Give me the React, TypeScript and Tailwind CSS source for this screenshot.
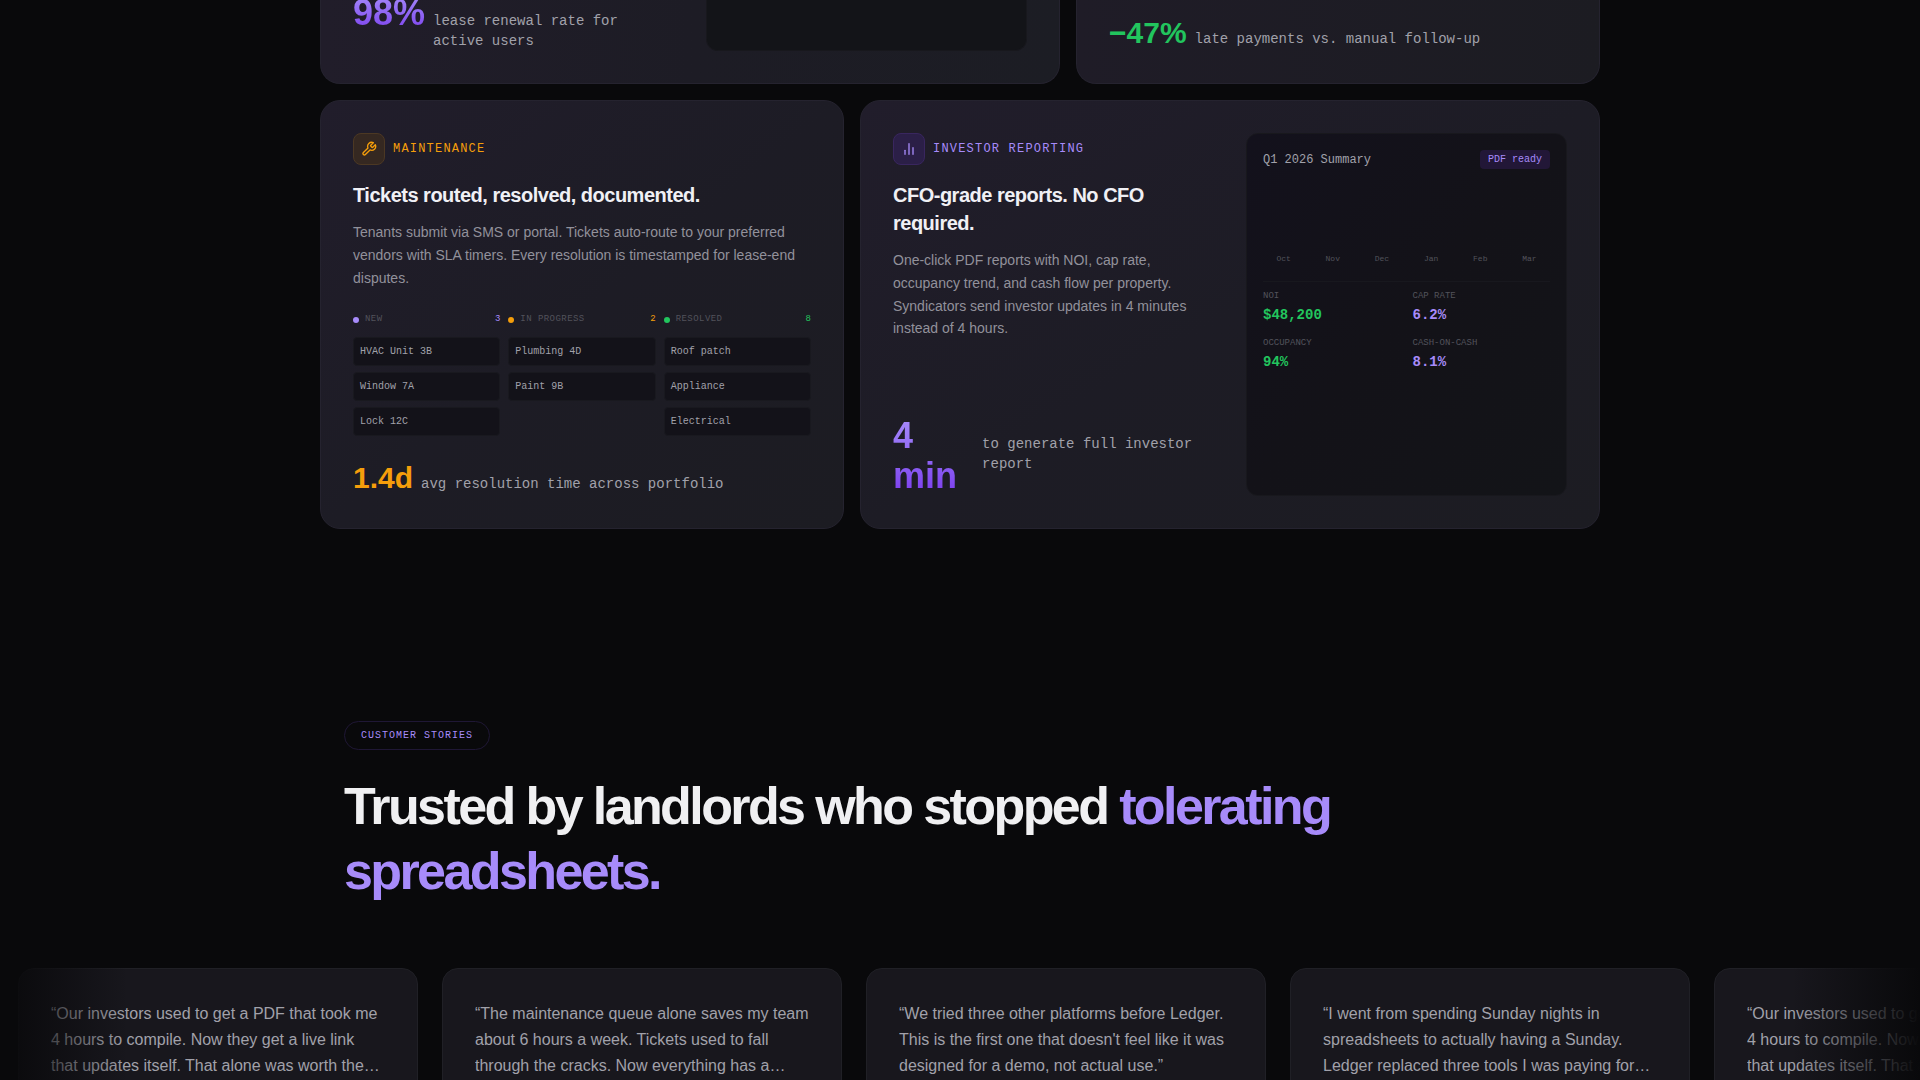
interface Column {
  name: string
  count: number
  dot: string
  text: string
  items: string[]
}

const columns: Column[] = [
  { name: 'New', count: 3, dot: 'bg-[#a78bfa]', text: 'text-[#a78bfa]', items: ['HVAC Unit 3B', 'Window 7A', 'Lock 12C'] },
  { name: 'In Progress', count: 2, dot: 'bg-[#f59e0b]', text: 'text-[#f59e0b]', items: ['Plumbing 4D', 'Paint 9B'] },
  { name: 'Resolved', count: 8, dot: 'bg-[#22c55e]', text: 'text-[#22c55e]', items: ['Roof patch', 'Appliance', 'Electrical'] },
]

const months = ['Oct', 'Nov', 'Dec', 'Jan', 'Feb', 'Mar']

const metrics = [
  { label: 'NOI', value: '$48,200', color: 'text-[#22c55e]' },
  { label: 'Cap Rate', value: '6.2%', color: 'text-[#a78bfa]' },
  { label: 'Occupancy', value: '94%', color: 'text-[#22c55e]' },
  { label: 'Cash-on-Cash', value: '8.1%', color: 'text-[#a78bfa]' },
]

const investorQuote =
  '“Our investors used to get a PDF that took me 4 hours to compile. Now they get a live link that updates itself. That alone was worth the switch for our whole syndication team.”'

const quotes = [
  investorQuote,
  '“The maintenance queue alone saves my team about 6 hours a week. Tickets used to fall through the cracks. Now everything has a timestamp and an owner from the first message.”',
  "“We tried three other platforms before Ledger. This is the first one that doesn't feel like it was designed for a demo, not actual use.”",
  '“I went from spending Sunday nights in spreadsheets to actually having a Sunday. Ledger replaced three tools I was paying for and none of them talked to each other.”',
  investorQuote,
]

const mono = "font-['Liberation_Mono',monospace]"
const card = 'border border-[#25232f] bg-linear-to-br from-[#211d2b] via-[#1d1c25] to-[#1c1c22]'
const panel = 'border border-[#18181d] bg-linear-to-br from-[#13111c] via-[#131218] to-[#131418]'
const gradientText = 'bg-linear-to-b from-[#a78bfa] to-[#7c3aed] bg-clip-text text-transparent'

function Stat({ value, label, className }: { value: string; label: string; className: string }) {
  return (
    <div className="flex items-baseline gap-2">
      <span className={`font-bold ${className}`}>{value}</span>
      <span className={`${mono} text-sm text-[#a1a1aa]`}>{label}</span>
    </div>
  )
}

function WrenchIcon() {
  return (
    <svg viewBox="0 0 24 24" className="size-4" fill="none" stroke="currentColor" strokeWidth="2" strokeLinecap="round" strokeLinejoin="round">
      <path d="M14.7 6.3a1 1 0 0 0 0 1.4l1.6 1.6a1 1 0 0 0 1.4 0l3.77-3.77a6 6 0 0 1-7.94 7.94l-6.91 6.91a2.12 2.12 0 0 1-3-3l6.91-6.91a6 6 0 0 1 7.94-7.94l-3.76 3.76z" />
    </svg>
  )
}

function BarsIcon() {
  return (
    <svg viewBox="0 0 24 24" className="size-4" fill="none" stroke="currentColor" strokeWidth="2" strokeLinecap="round">
      <path d="M18 20V10" />
      <path d="M12 20V4" />
      <path d="M6 20v-6" />
    </svg>
  )
}

function Maintenance() {
  return (
    <article className={`${card} col-span-5 flex flex-col rounded-[20px] p-8`}>
      <div className="flex items-center gap-2">
        <div className="flex size-8 items-center justify-center rounded-lg border border-[#4c3823] bg-[#352821] text-[#f59e0b]">
          <WrenchIcon />
        </div>
        <span className={`${mono} text-xs tracking-widest text-[#f59e0b] uppercase`}>Maintenance</span>
      </div>
      <h3 className="mt-4 text-xl font-bold tracking-tight text-[#f0f0f5]">Tickets routed, resolved, documented.</h3>
      <p className="mt-3 text-sm leading-relaxed text-[#92919b]">
        Tenants submit via SMS or portal. Tickets auto-route to your preferred vendors with SLA timers. Every
        resolution is timestamped for lease-end disputes.
      </p>

      <div className="mt-6 grid grid-cols-3 gap-2">
        {columns.map((col) => (
          <div key={col.name}>
            <div className={`${mono} mb-2 flex h-4 items-start gap-1.5 text-[9px] leading-3`}>
              <span className={`mt-1 size-1.5 rounded-full ${col.dot}`} />
              <span className="tracking-wider text-[#52525b] uppercase">{col.name}</span>
              <span className={`ml-auto ${col.text}`}>{col.count}</span>
            </div>
            <ul className="flex flex-col gap-1.5">
              {col.items.map((item) => (
                <li key={item} className={`${mono} rounded-sm border border-[#19191f] bg-[#131219] p-1.5 text-[10px] leading-[15px] text-[#a1a1aa]`}>
                  {item}
                </li>
              ))}
            </ul>
          </div>
        ))}
      </div>

      <div className="mt-6">
        <Stat value="1.4d" label="avg resolution time across portfolio" className="text-3xl text-[#f59e0b]" />
      </div>
    </article>
  )
}

function InvestorReporting() {
  return (
    <article className={`${card} col-span-7 grid grid-cols-2 gap-8 rounded-[20px] p-8`}>
      <div className="flex flex-col">
        <div className="flex items-center gap-2">
          <div className="flex size-8 items-center justify-center rounded-lg border border-[#39265f] bg-[#2b1f47] text-[#a78bfa]">
            <BarsIcon />
          </div>
          <span className={`${mono} text-xs tracking-widest text-[#a78bfa] uppercase`}>Investor Reporting</span>
        </div>
        <h3 className="mt-4 text-xl font-bold tracking-tight text-[#f0f0f5]">CFO-grade reports. No CFO required.</h3>
        <p className="mt-3 text-sm leading-relaxed text-[#92919b]">
          One-click PDF reports with NOI, cap rate, occupancy trend, and cash flow per property. Syndicators send
          investor updates in 4 minutes instead of 4 hours.
        </p>
        <div className="mt-auto">
          <Stat value="4 min" label="to generate full investor report" className={`${gradientText} text-4xl`} />
        </div>
      </div>

      <div className={`${panel} ${mono} rounded-xl p-4`}>
        <div className="flex items-center justify-between">
          <span className="text-xs text-[#a1a1aa]">Q1 2026 Summary</span>
          <span className="rounded-sm bg-[#221737] px-2 py-0.5 text-[10px] leading-[15px] text-[#a78bfa]">PDF ready</span>
        </div>
        <div className="mt-4 flex h-20 items-end gap-2">
          {months.map((month) => (
            <span key={month} className="flex-1 text-center text-[8px] leading-3 text-[#52525b]">
              {month}
            </span>
          ))}
        </div>
        <dl className="mt-4 grid grid-cols-2 gap-3 border-t border-[#18181e] pt-2">
          {metrics.map((m) => (
            <div key={m.label}>
              <dt className="text-[9px] leading-[13px] text-[#52525b] uppercase">{m.label}</dt>
              <dd className={`mt-0.5 text-sm font-bold ${m.color}`}>{m.value}</dd>
            </div>
          ))}
        </dl>
      </div>
    </article>
  )
}

function Stories() {
  return (
    <section className="relative mt-24 pt-24">
      <div className="mx-auto max-w-[1280px] px-6">
        <span className={`${mono} inline-block rounded-full border border-[#1f1735] px-4 py-1.5 align-top text-[10px] leading-[15px] tracking-widest text-[#a78bfa] uppercase`}>
          Customer Stories
        </span>
        <h2 className="mt-6 text-[52px] leading-[65px] font-bold tracking-tighter text-[#f0f0f2]">
          Trusted by landlords who stopped <span className="text-[#a78bfa]">tolerating spreadsheets.</span>
        </h2>
      </div>

      <div className="mt-16 ml-[18px] flex w-max gap-6">
        {quotes.map((quote, i) => (
          <figure key={i} className="w-[400px] rounded-2xl border border-[#202026] bg-[#18171d] p-8">
            <blockquote className="line-clamp-3 leading-relaxed text-[#a1a1aa]">{quote}</blockquote>
          </figure>
        ))}
      </div>

      {/* edge fades over the marquee */}
      <div className="pointer-events-none absolute inset-y-0 left-0 w-32 bg-linear-to-r from-[#09090b] to-transparent" />
      <div className="pointer-events-none absolute inset-y-0 right-0 w-32 bg-linear-to-l from-[#09090b] to-transparent" />
    </section>
  )
}

export default function App() {
  return (
    <main className="h-screen overflow-hidden bg-[#09090b] font-['Liberation_Sans',Arial,sans-serif]">
      <section className="mx-auto grid max-w-[1280px] grid-cols-12 gap-4">
        <article className="col-span-7 grid grid-cols-2 gap-8 rounded-b-[20px] border border-t-0 border-[#25232f] bg-linear-to-r from-[#211d2a] via-[#1d1c25] to-[#1c1d24] px-8 pb-8">
          <div className="-mt-[7px]">
            <Stat value="98%" label="lease renewal rate for active users" className={`${gradientText} text-4xl`} />
          </div>
          <div className="rounded-b-xl border border-t-0 border-[#18181d] bg-[#131418]" />
        </article>
        <article className="col-span-5 flex flex-col justify-end rounded-b-[20px] border border-t-0 border-[#25232f] bg-linear-to-r from-[#1f1c27] to-[#1c1c22] px-8 pb-8">
          <Stat value="−47%" label="late payments vs. manual follow-up" className="text-3xl text-[#22c55e]" />
        </article>
        <Maintenance />
        <InvestorReporting />
      </section>
      <Stories />
    </main>
  )
}
